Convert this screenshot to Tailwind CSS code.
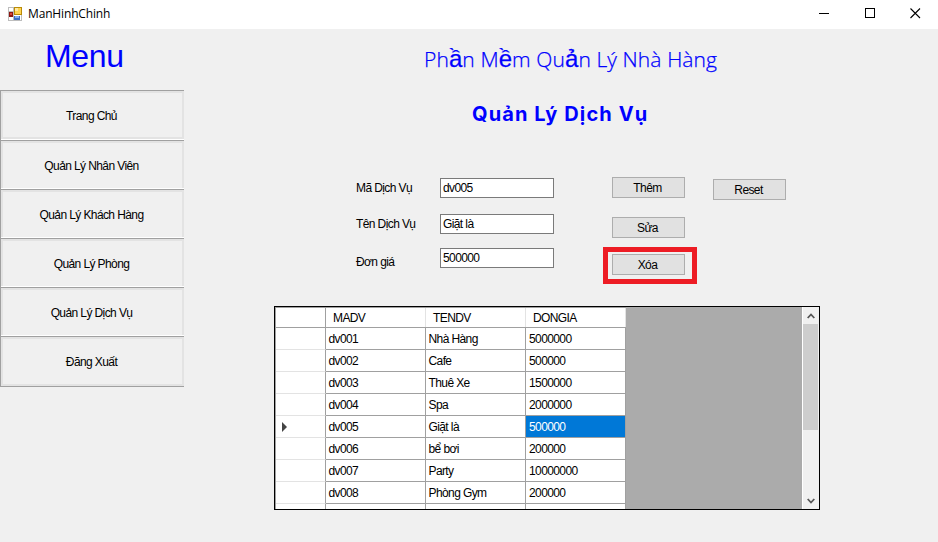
<!DOCTYPE html>
<html lang="vi">
<head>
<meta charset="utf-8">
<title>ManHinhChinh</title>
<script src="https://cdn.jsdelivr.net/npm/@tailwindcss/browser@4"></script>
</head>
<body class="w-[938px] h-[542px] overflow-hidden bg-[#f0f0f0] text-black text-[12px] leading-[14px] tracking-[-0.6px] font-['Liberation_Sans',sans-serif] whitespace-nowrap">
<header class="flex h-[29px] bg-white items-center justify-between pl-2">
  <div class="flex items-center gap-[6px] pb-[2px]">
    <svg width="14" height="14" viewBox="0 0 14 14"><path fill="#bdbdbd" d="M0 0h14v14H0z"/><path fill="#fff" d="M1 1h4v3H1zM1 10h4v3H1zM6 8h7v5H6z"/><path fill="#b98b08" d="M6 0h8v8H6z"/><path fill="#ffd34f" d="M7 1h6v6H7z"/><path fill="#ffe9a0" d="M7 1h3v3H7z"/><path fill="#8c1712" d="M1 5h4v5H1z"/><path fill="#d9463a" d="M2 6h2v2H2z"/><path fill="#3d6fc4" d="M6 9h6v4H6z"/><path fill="#83aef0" d="M7 9h4v2H7z"/></svg>
    <span class="text-[12px] tracking-[-0.15px] font-['Open_Sans',sans-serif]">ManHinhChinh</span>
  </div>
  <div class="flex gap-[35px] pr-[17px] pb-[2px]">
    <svg width="11" height="11" shape-rendering="crispEdges"><path d="M0 5.5h10" stroke="#000"/></svg>
    <svg width="10" height="11" shape-rendering="crispEdges"><path d="M.5.5h9v9h-9z" fill="none" stroke="#000"/></svg>
    <svg width="11" height="11"><path d="M.5.5l9.5 9.5M10 .5l-9.5 9.5" stroke="#000" stroke-width="1.1"/></svg>
  </div>
</header>
<div class="flex">
  <aside class="w-[185px] shrink-0">
    <h1 class="h-[61px] pt-[9px] pl-[45px] text-[32px] leading-[37px] tracking-[-0.3px] text-[#00f]">Menu</h1>
    <nav class="w-[184px] border-b border-[#a0a0a0]">
      <div class="h-[50px] border-l border-t border-[#a0a0a0]"><div class="h-[49px] border-b border-white"><div class="h-[48px] border-2 border-[#e3e3e3] flex items-center justify-center pr-[2px] pt-[2px]"><span>Trang Chủ</span></div></div></div>
      <div class="h-[49px] border-l border-t border-[#a0a0a0]"><div class="h-[48px] border-b border-white"><div class="h-[47px] border-2 border-b-0 border-[#e3e3e3] flex items-center justify-center pr-[2px]"><span>Quản Lý Nhân Viên</span></div></div></div>
      <div class="h-[49px] border-l border-t border-[#a0a0a0]"><div class="h-[48px] border-b border-white"><div class="h-[47px] border-2 border-b-0 border-[#e3e3e3] flex items-center justify-center pr-[2px]"><span>Quản Lý Khách Hàng</span></div></div></div>
      <div class="h-[49px] border-l border-t border-[#a0a0a0]"><div class="h-[48px] border-b border-white"><div class="h-[47px] border-2 border-b-0 border-[#e3e3e3] flex items-center justify-center pr-[2px]"><span>Quản Lý Phòng</span></div></div></div>
      <div class="h-[49px] border-l border-t border-[#a0a0a0]"><div class="h-[48px] border-b border-white"><div class="h-[47px] border-2 border-b-0 border-[#e3e3e3] flex items-center justify-center pr-[2px]"><span>Quản Lý Dịch Vụ</span></div></div></div>
      <div class="h-[50px] border-l border-t border-[#a0a0a0]"><div class="h-[49px] border-2 border-[#e3e3e3] flex items-center justify-center pr-[2px]"><span>Đăng Xuất</span></div></div>
    </nav>
  </aside>
  <main class="flex-1 pl-[89px]">
    <h2 class="h-[61px] pt-[14px] pl-[150px] text-[21px] leading-[32px] tracking-[0.1px] font-light text-[#00f] [-webkit-text-stroke:0.25px_#00f] font-['Open_Sans','Noto_Sans',sans-serif]">Ph<span class="font-['Liberation_Sans'] font-normal text-[24px]">ầ</span>n M<span class="font-['Liberation_Sans'] font-normal text-[24px]">ề</span>m Qu<span class="font-['Liberation_Sans'] font-normal text-[24px]">ả</span>n Lý Nhà Hàng</h2>
    <h3 class="h-[87px] pt-[10px] pl-[198px] text-[20px] leading-[28px] tracking-[1.1px] font-bold text-[#00f] font-['Inter','Liberation_Sans',sans-serif]">Quản Lý Dịch Vụ</h3>
    <div class="flex h-[129px] pl-[82px]">
      <div class="w-[84px] pt-[4px]">
        <div class="h-[36px]"><span>Mã Dịch Vụ</span></div>
        <div class="h-[38px]"><span>Tên Dịch Vụ</span></div>
        <div><span>Đơn giá</span></div>
      </div>
      <div class="w-[114px] pt-[1px]">
        <div class="h-[20px] mb-[16px] border border-[#7a7a7a] bg-white pl-[2px] pt-[2px]">dv005</div>
        <div class="h-[20px] mb-[14px] border border-[#7a7a7a] bg-white pl-[2px] pt-[2px]">Giặt là</div>
        <div class="h-[20px] border border-[#7a7a7a] bg-white pl-[2px] pt-[2px]">500000</div>
      </div>
      <div class="pl-[49px]">
        <div class="ml-[9px] w-[73px] h-[21px] border border-[#adadad] bg-[#e1e1e1] flex items-center justify-center pr-[2px]">Thêm</div>
        <div class="ml-[9px] mt-[19px] w-[73px] h-[21px] border border-[#adadad] bg-[#e1e1e1] flex items-center justify-center pr-[2px]">Sửa</div>
        <div class="mt-[9px] w-[94px] h-[37px] border-[5px] border-[#ed1c24] pl-[4px] pt-[2px]"><div class="w-[73px] h-[21px] border border-[#adadad] bg-[#e1e1e1] flex items-center justify-center pr-[2px]">Xóa</div></div>
      </div>
      <div class="ml-[16px] mt-[2px] w-[73px] h-[21px] border border-[#adadad] bg-[#e1e1e1] flex items-center justify-center pr-[2px]">Reset</div>
    </div>
    <section class="w-[546px] h-[204px] border border-black bg-[#ababab] flex justify-between overflow-hidden">
      <div class="w-[351px] h-[202px] border-l border-t border-[#a0a0a0] overflow-hidden">
        <div class="grid grid-cols-[50px_100px_100px_100px] grid-rows-[19px] h-[20px] bg-white border-b border-[#a0a0a0] leading-[20px]">
          <div class="border-r border-[#a0a0a0]"></div><div class="border-r border-[#e3e3e3] pl-[7px]">MADV</div><div class="border-r border-[#e3e3e3] pl-[7px]">TENDV</div><div class="border-r border-[#e3e3e3] pl-[7px]">DONGIA</div>
        </div>
        <div id="rows"></div>
      </div>
      <div class="w-[17px] flex flex-col bg-[#f0f0f0] border-l border-white">
        <div class="h-[17px] flex items-center justify-center pr-[1px]"><svg width="8" height="6"><path d="M.7 5L4 1.5 7.3 5" fill="none" stroke="#555" stroke-width="1.8"/></svg></div>
        <div class="h-[106px] w-[15px] bg-[#cdcdcd]"></div>
        <div class="flex-1"></div>
        <div class="h-[17px] flex items-center justify-center pr-[1px]"><svg width="8" height="6"><path d="M.7 1L4 4.5 7.3 1" fill="none" stroke="#555" stroke-width="1.8"/></svg></div>
      </div>
    </section>
  </main>
</div>
<script>
const rows = [['dv001','Nhà Hàng','5000000'],['dv002','Cafe','500000'],['dv003','Thuê Xe','1500000'],['dv004','Spa','2000000'],['dv005','Giặt là','500000'],['dv006','bể bơi','200000'],['dv007','Party','10000000'],['dv008','Phòng Gym','200000'],['','','']];
document.getElementById('rows').innerHTML = rows.map((r, i) => `<div class="grid grid-cols-[50px_100px_100px_100px] grid-rows-[22px] h-[22px] bg-white leading-[22px]"><div class="border-r border-r-[#a0a0a0] border-b border-b-[#e3e3e3] pl-[6px] flex items-center">${i === 4 ? '<svg width="5" height="10"><path d="M0 0l5 5-5 5z" fill="#444"/></svg>' : ''}</div>${r.map((c, j) => `<div class="border-r border-b border-[#a0a0a0] ${j === 2 ? 'pl-[3px]' : 'pl-[2.5px]'} ${i === 4 && j === 2 ? 'bg-[#0078d7] text-white' : ''}">${c}</div>`).join('')}</div>`).join('');
</script>
</body>
</html>
